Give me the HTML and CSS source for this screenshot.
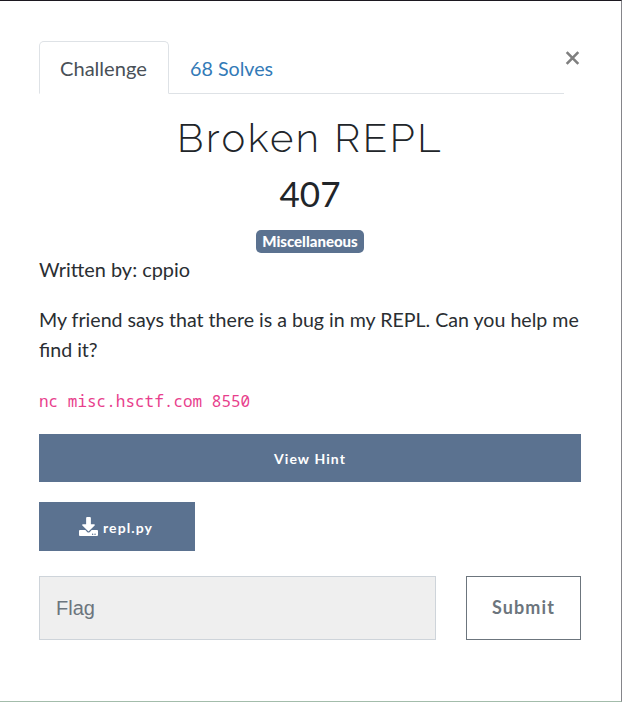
FILE: index.html
```html
<!DOCTYPE html>
<html lang="en">
<head>
<meta charset="utf-8">
<title>Broken REPL</title>
<link rel="stylesheet" href="styles.css">
</head>
<body>
<main class="modal">
  <button class="close" aria-label="Close"><svg viewBox="0 0 14 14"><path d="M1.2 1.2 12.8 12.8M12.8 1.2 1.2 12.8"/></svg></button>
  <nav class="tabs"><a class="tab active">Challenge</a><a class="tab solves">68 Solves</a></nav>
  <h1 class="name">Broken REPL</h1>
  <h2 class="value">407</h2>
  <div class="tags"><span class="badge">Miscellaneous</span></div>
  <div class="desc">
    <p>Written by: cppio</p>
    <p class="story">My friend says that there is a bug in my REPL. Can you help me find it?</p>
    <p><code>nc misc.hsctf.com 8550</code></p>
  </div>
  <a class="btn hint">View Hint</a>
  <a class="btn file"><svg viewBox="0 0 512 512"><path d="M216 0h80c13 0 24 11 24 24v168h88c18 0 27 21 14 34L270 378c-7 7-20 7-28 0L90 226c-13-13-4-34 14-34h88V24c0-13 11-24 24-24zm296 376v112c0 13-11 24-24 24H24c-13 0-24-11-24-24V376c0-13 11-24 24-24h147l49 49c20 20 52 20 72 0l49-49h147c13 0 24 11 24 24zM388 464a20 20 0 1 0-40 0 20 20 0 1 0 40 0zm64 0a20 20 0 1 0-40 0 20 20 0 1 0 40 0z"/></svg>repl.py</a>
  <form class="row"><input class="flag" placeholder="Flag" aria-label="Flag"><button class="submit" type="button">Submit</button></form>
</main>
</body>
</html>
```
FILE: styles.css
```css
* { box-sizing: border-box; }
body { margin: 0; background: #fff; color: #2a2e32; font: 20px/30px Lato, sans-serif; }
.modal { position: relative; height: 702px; padding: 40px 40px 0 39px; border-top: 1px solid #1c1820; border-right: 1px solid #85858a; border-bottom: 1px solid #a3bcab; }
.close { position: absolute; left: 565px; top: 50px; width: 15px; height: 14px; padding: 0; border: 0; background: none; }
.close svg { display: block; width: 15px; height: 14px; fill: none; stroke: #7f7f7f; stroke-width: 2.6; }
.tabs { display: flex; width: 525px; height: 53px; border-bottom: 1px solid #dee2e6; }
.tab { height: 53px; padding: 11px 20px; border: 1px solid transparent; color: #337ab7; line-height: 30px; font-size: 19.7px; }
.solves { padding-top: 12px; }
.active { width: 130px; border-color: #dee2e6 #dee2e6 #fff; border-radius: 5px 5px 0 0; background: #fff; color: #495057; font-size: 20.1px; }
.name { margin: 20px 0 0; text-align: center; color: #212529; font: 300 40px/48px Raleway, Lato, sans-serif; letter-spacing: 2.55px; }
.value { margin: 9px 0 0; text-align: center; font-weight: 400; font-size: 35px; line-height: 44px; color: #212529; }
.tags { margin-top: 15px; height: 24px; display: flex; justify-content: center; }
.badge { height: 23px; padding: 0 6px; border-radius: 5px; background: #5b7290; color: #fff; font-weight: 900; font-size: 15px; line-height: 23px; }
.desc p { margin: 0 0 20px; height: 30px; font-size: 19.9px; }
.desc .story { height: 60px; margin: 21px -2px 19px 0; font-size: 19.6px; }
code { display: block; height: 30px; padding-top: 2px; font: 16px/31px "Noto Sans Mono", "DejaVu Sans Mono", monospace; color: #e83e8c; }
.btn { display: flex; align-items: center; justify-content: center; background: #5b7290; color: #fff; font-weight: 700; font-size: 14px; letter-spacing: 1.1px; }
.hint { height: 48px; margin-top: 19px; padding-top: 2px; }
.file { width: 156px; height: 49px; margin-top: 20px; padding-top: 2px; }
.file svg { width: 19px; height: 19px; margin: -2px 5px 0 -2px; fill: #fff; }
.row { display: flex; gap: 30px; margin: 25px 0 0; }
.flag { width: 397px; height: 64px; padding: 0 16px; border: 1px solid #ced4da; border-radius: 0; background: #efefef; font: 20px "Liberation Sans", sans-serif; }
.flag::placeholder { color: #6c757d; opacity: 1; }
.submit { width: 115px; height: 64px; padding: 0 0 2px; border: 1px solid #6c757d; background: #fff; color: #6c757d; font: 700 18px Lato, sans-serif; letter-spacing: 1.1px; }
```
